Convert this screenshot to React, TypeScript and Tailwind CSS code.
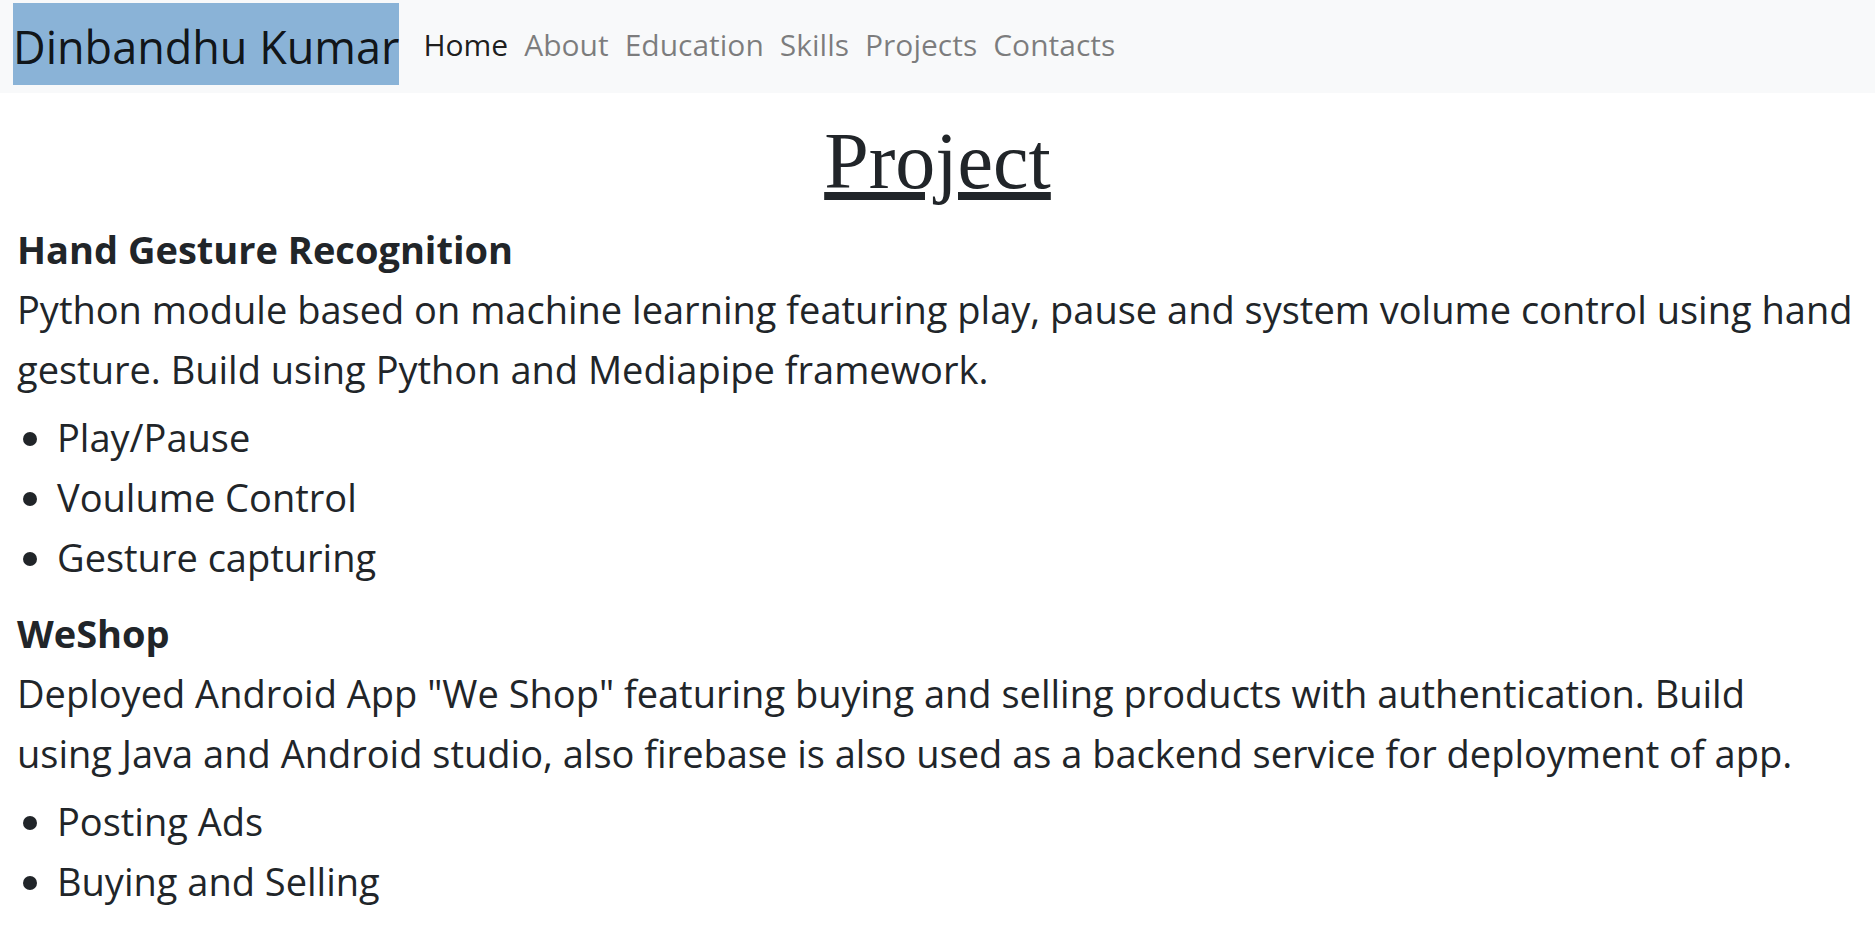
const links = ["Home", "About", "Education", "Skills", "Projects", "Contacts"];

const projects = [
  {
    title: "Hand Gesture Recognition",
    description:
      "Python module based on machine learning featuring play, pause and system volume control using hand gesture. Build using Python and Mediapipe framework.",
    features: ["Play/Pause", "Voulume Control", "Gesture capturing"],
  },
  {
    title: "WeShop",
    description:
      'Deployed Android App "We Shop" featuring buying and selling products with authentication. Build using\u00a0Java and Android studio, also firebase is also used as a backend service for deployment of app.',
    features: ["Posting Ads", "Buying and Selling"],
  },
];

export default function App() {
  return (
    <div className="min-h-screen bg-white font-['Open_Sans',sans-serif] text-[#212529]">
      <nav className="flex items-start gap-6 bg-[#f8f9fa] px-[13px] pt-[3px] pb-2">
        <a
          href="#home"
          className="bg-[#8ab3d7] pt-2 pb-[2px] text-[45px] leading-[72px] whitespace-nowrap text-black/90"
        >
          Dinbandhu Kumar
        </a>
        <ul className="flex gap-4 pt-[18px]">
          {links.map((label) => (
            <li key={label}>
              <a
                href={`#${label.toLowerCase()}`}
                className={
                  label === "Home"
                    ? "text-[30px] leading-[48px] text-black/90"
                    : "text-[30px] leading-[48px] text-black/50"
                }
              >
                {label}
              </a>
            </li>
          ))}
        </ul>
      </nav>
      <main className="px-[17px] pt-5">
        <h1 className="text-center font-['Liberation_Serif',serif] text-[80px] leading-[96px] underline">
          Project
        </h1>
        <div className="flex flex-col gap-4 pt-[10px]">
          {projects.map((project) => (
            <section key={project.title} className="text-[38px] leading-[60px]">
              <h2 className="font-bold">{project.title}</h2>
              <p>{project.description}</p>
              <ul className="list-disc pt-2 pl-10">
                {project.features.map((feature) => (
                  <li key={feature}>{feature}</li>
                ))}
              </ul>
            </section>
          ))}
        </div>
      </main>
    </div>
  );
}
